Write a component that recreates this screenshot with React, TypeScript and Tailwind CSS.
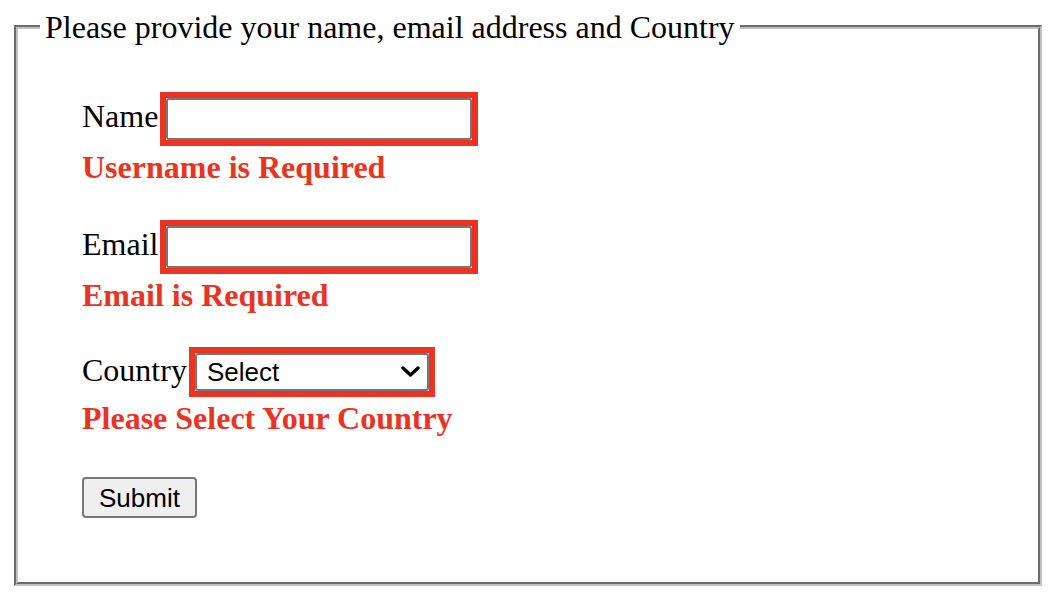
import React from "react";

const serif = { fontFamily: '"Liberation Serif", "Times New Roman", serif' };

function ErrorBox({ children }: { children: React.ReactNode }) {
  return <div className="ml-[2px] flex border-[6px] border-[#eb3323]">{children}</div>;
}

function Row({ label, children }: { label: string; children: React.ReactNode }) {
  return (
    <div className="flex items-center">
      <span className="mb-[4px] text-[32px] leading-[36.8px] text-black">{label}</span>
      <ErrorBox>{children}</ErrorBox>
    </div>
  );
}

function ErrorText({ text }: { text: string }) {
  return <p className="mt-[3px] text-[32px] leading-[36.8px] font-bold text-[#eb3323]">{text}</p>;
}

export default function App() {
  return (
    <div className="w-[1058px] h-[614px] bg-white pl-[14px] pt-[9px]" style={serif}>
      <fieldset className="w-[1028px] h-[577px] border-4 [border-style:groove] border-[#c0c0c0] px-[22px]">
        <legend className="px-[5px] text-[32px] leading-[36.8px] text-black">
          Please provide your name, email address and Country
        </legend>

        <form className="pl-[42px] pt-[46px] flex flex-col items-start" onSubmit={(e) => e.preventDefault()}>
          {/* NAME */}
          <Row label="Name">
            <input
              type="text"
              className="w-[306px] h-[42px] border-2 border-[#767676] rounded-[3px] bg-white outline-none"
            />
          </Row>
          <ErrorText text="Username is Required" />

          {/* EMAIL */}
          <div className="mt-[34px]">
            <Row label="Email">
              <input
                type="email"
                className="w-[306px] h-[42px] border-2 border-[#767676] rounded-[3px] bg-white outline-none"
              />
            </Row>
          </div>
          <ErrorText text="Email is Required" />

          {/* COUNTRY */}
          <div className="mt-[34px]">
            <Row label="Country">
              <div className="relative">
                <select
                  defaultValue=""
                  className="appearance-none w-[234px] h-[38px] border-2 border-[#767676] rounded-[3px] bg-white pl-[10px] text-[26px] leading-[30px] text-black outline-none"
                  style={{ fontFamily: '"Liberation Sans", Arial, sans-serif' }}
                >
                  <option value="">Select</option>
                  <option value="in">India</option>
                  <option value="us">USA</option>
                </select>
                <svg
                  className="pointer-events-none absolute right-[9px] top-[13px]"
                  width="19"
                  height="11"
                  viewBox="0 0 19 11"
                  fill="none"
                >
                  <path d="M2 2L9.5 9L17 2" stroke="#000" strokeWidth="3.4" strokeLinecap="round" strokeLinejoin="round" />
                </svg>
              </div>
            </Row>
          </div>
          <ErrorText text="Please Select Your Country" />

          <button
            type="submit"
            className="mt-[40px] w-[115px] h-[41px] border-2 border-[#767676] rounded-[4px] bg-[#efefef] text-[26px] leading-[30px] text-black"
            style={{ fontFamily: '"Liberation Sans", Arial, sans-serif' }}
          >
            Submit
          </button>
        </form>
      </fieldset>
    </div>
  );
}
